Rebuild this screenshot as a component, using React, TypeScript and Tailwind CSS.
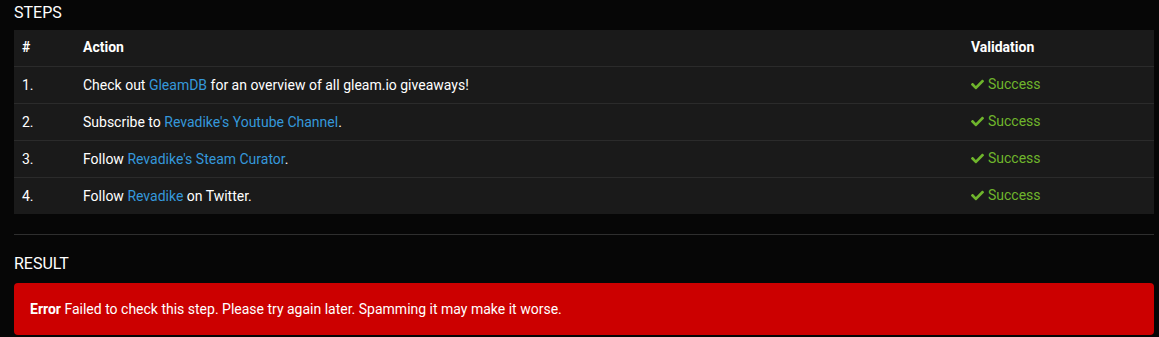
import { FaCheck } from "react-icons/fa";

const steps = [
  { n: "1.", pre: "Check out ", link: "GleamDB", post: " for an overview of all gleam.io giveaways!" },
  { n: "2.", pre: "Subscribe to ", link: "Revadike's Youtube Channel", post: "." },
  { n: "3.", pre: "Follow ", link: "Revadike's Steam Curator", post: "." },
  { n: "4.", pre: "Follow ", link: "Revadike", post: " on Twitter." },
];

export default function App() {
  return (
    <div
      className="min-h-screen bg-[#060606] px-[14px] pb-1 text-[14px] text-white"
      style={{ fontFamily: "Roboto, 'Liberation Sans', sans-serif" }}
    >
      <h2 className="pt-[2px] text-[16px] leading-[22px] text-white">STEPS</h2>
      <table className="mt-[6px] w-[1140px] border-collapse bg-[#1a1a1a]">
        <thead>
          <tr className="h-[36px]">
            <th className="w-[61px] px-2 text-left font-bold">#</th>
            <th className="px-2 text-left font-bold">Action</th>
            <th className="w-[191px] px-2 text-left font-bold">Validation</th>
          </tr>
        </thead>
        <tbody>
          {steps.map((s) => (
            <tr key={s.n} className="h-[37px] border-t border-[#2b2b2b]">
              <td className="px-2 pt-[2px]">{s.n}</td>
              <td className="px-2 pt-[2px]">
                {s.pre}
                <a className="text-[#3598db]">{s.link}</a>
                {s.post}
              </td>
              <td className="px-2 pt-[2px] text-[#6fb52c]">
                <span className="inline-flex items-center gap-[4px]">
                  <FaCheck className="h-[13px] w-[13px]" />
                  Success
                </span>
              </td>
            </tr>
          ))}
        </tbody>
      </table>
      <hr className="mt-[20px] w-[1140px] border-t border-[#2e2e2e]" />
      <h2 className="mt-[18px] text-[16px] leading-[22px] text-white">RESULT</h2>
      <div className="mt-[8px] flex h-[52px] w-[1140px] items-center rounded-[4px] bg-[#cc0000] px-[16px]">
        <span>
          <b className="font-bold">Error</b> Failed to check this step. Please try again later. Spamming it may make it worse.
        </span>
      </div>
    </div>
  );
}
